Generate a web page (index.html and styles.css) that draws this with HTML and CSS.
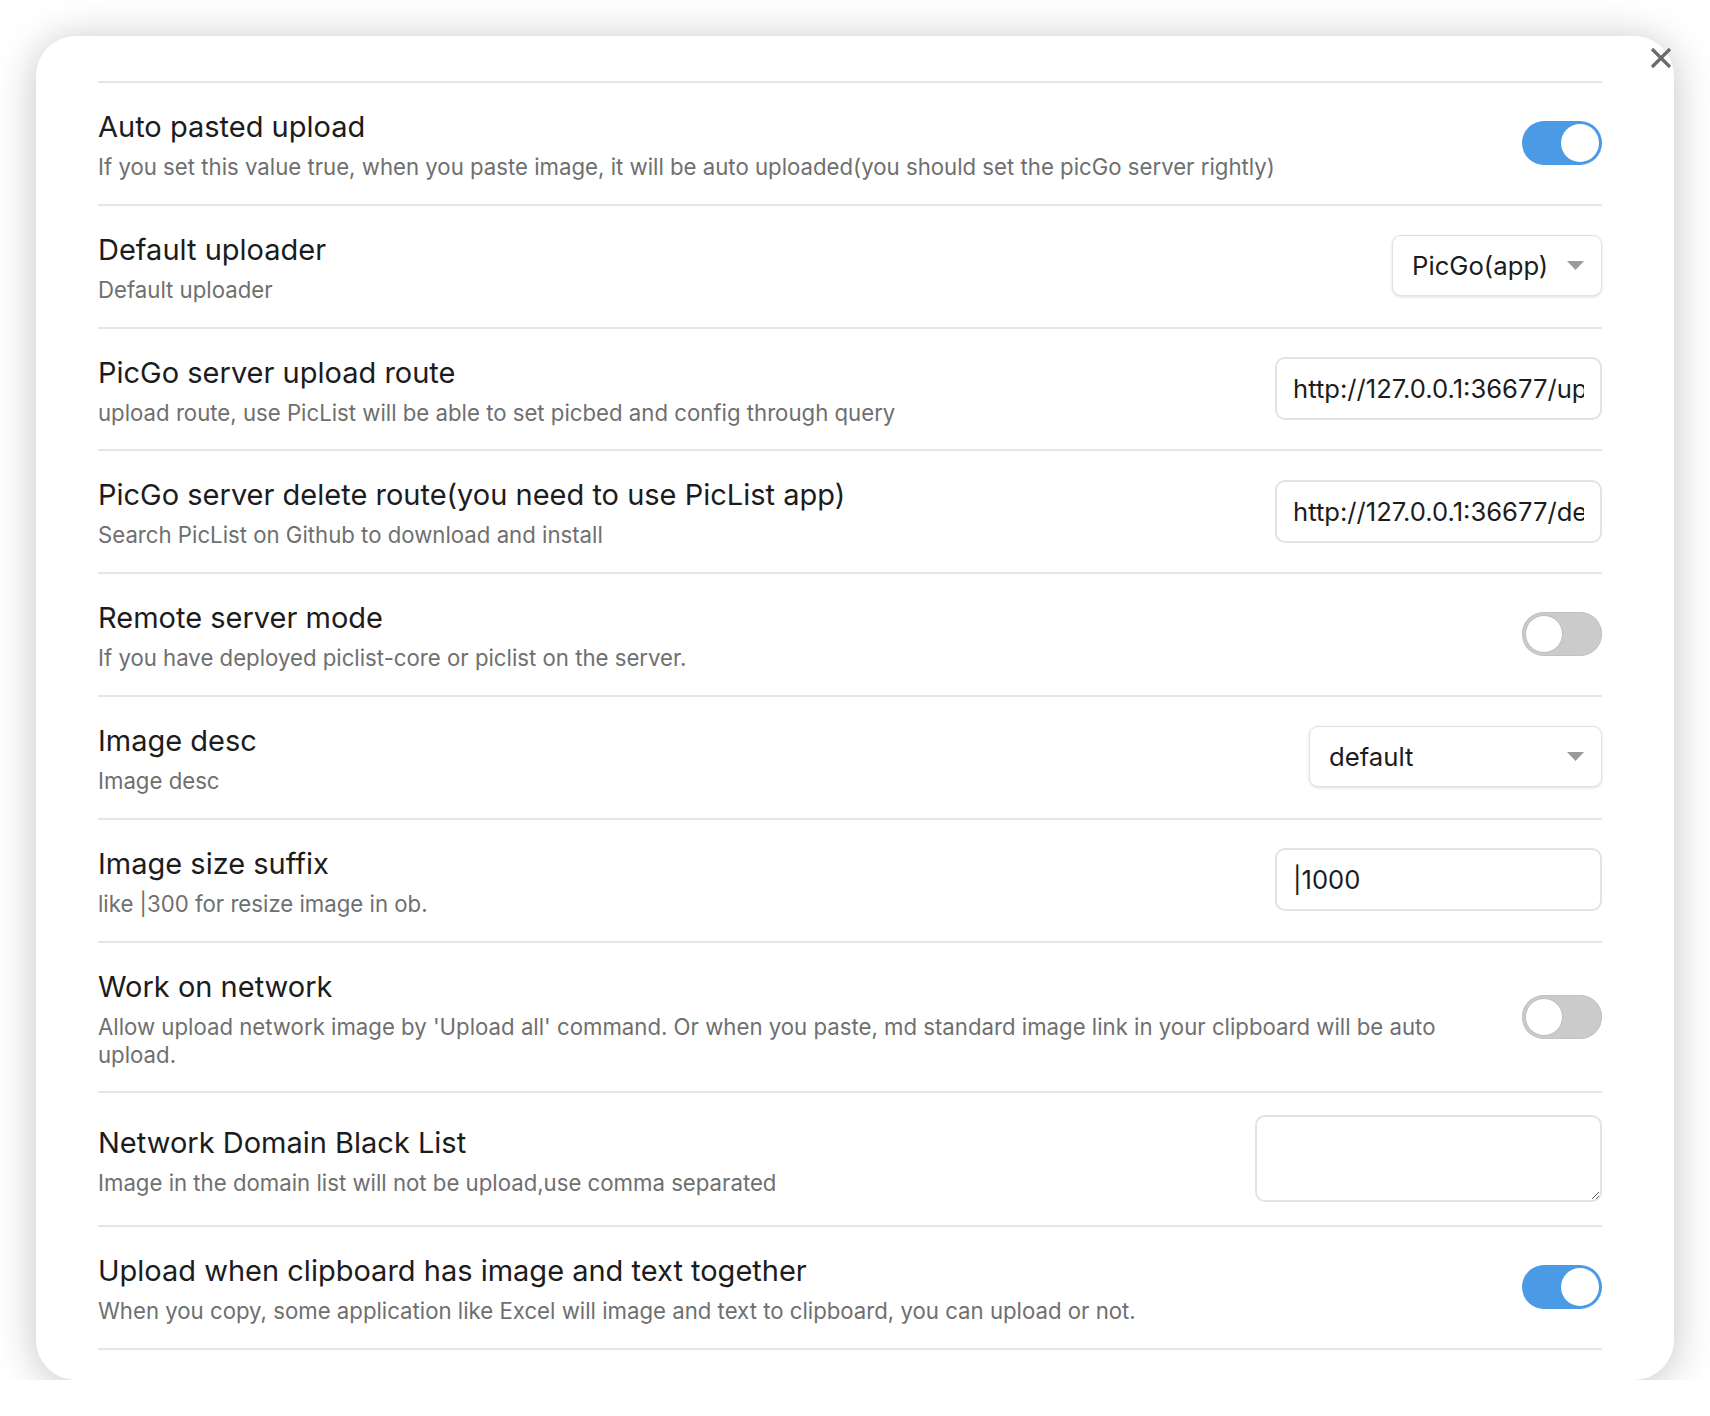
FILE: index.html
```html
<!DOCTYPE html>
<html lang="en">
<head>
<meta charset="utf-8">
<title>Image auto upload settings</title>
<link rel="stylesheet" href="styles.css">
</head>
<body>
<div class="modal">
  <button class="close" aria-label="Close">
    <svg width="22" height="22" viewBox="0 0 22 22"><path d="M2 2 L20 20 M20 2 L2 20" stroke="#6b6b6b" stroke-width="3.2" stroke-linecap="butt" fill="none"/></svg>
  </button>
  <div class="settings">
    <div class="item">
      <div class="info">
        <div class="name">Auto pasted upload</div>
        <div class="desc">If you set this value true, when you paste image, it will be auto uploaded(you should set the picGo server rightly)</div>
      </div>
      <div class="control"><div class="toggle on"><span class="knob"></span></div></div>
    </div>
    <div class="item">
      <div class="info">
        <div class="name">Default uploader</div>
        <div class="desc">Default uploader</div>
      </div>
      <div class="control">
        <div class="dropdown dd-uploader"><span class="dd-text">PicGo(app)</span>
          <svg class="dd-arrow" width="17" height="9" viewBox="0 0 17 9"><path d="M0 0 H17 L8.5 9 Z" fill="#9a9a9a"/></svg>
        </div>
      </div>
    </div>
    <div class="item">
      <div class="info">
        <div class="name">PicGo server upload route</div>
        <div class="desc">upload route, use PicList will be able to set picbed and config through query</div>
      </div>
      <div class="control"><input class="text-input" type="text" value="http://127.0.0.1:36677/upload"></div>
    </div>
    <div class="item">
      <div class="info">
        <div class="name">PicGo server delete route(you need to use PicList app)</div>
        <div class="desc">Search PicList on Github to download and install</div>
      </div>
      <div class="control"><input class="text-input" type="text" value="http://127.0.0.1:36677/delete"></div>
    </div>
    <div class="item">
      <div class="info">
        <div class="name">Remote server mode</div>
        <div class="desc">If you have deployed piclist-core or piclist on the server.</div>
      </div>
      <div class="control"><div class="toggle"><span class="knob"></span></div></div>
    </div>
    <div class="item">
      <div class="info">
        <div class="name">Image desc</div>
        <div class="desc">Image desc</div>
      </div>
      <div class="control">
        <div class="dropdown dd-desc"><span class="dd-text">default</span>
          <svg class="dd-arrow" width="17" height="9" viewBox="0 0 17 9"><path d="M0 0 H17 L8.5 9 Z" fill="#9a9a9a"/></svg>
        </div>
      </div>
    </div>
    <div class="item">
      <div class="info">
        <div class="name">Image size suffix</div>
        <div class="desc">like |300 for resize image in ob.</div>
      </div>
      <div class="control"><input class="text-input" type="text" value="|1000"></div>
    </div>
    <div class="item">
      <div class="info info-narrow">
        <div class="name">Work on network</div>
        <div class="desc">Allow upload network image by 'Upload all' command. Or when you paste, md standard image link in your clipboard will be auto upload.</div>
      </div>
      <div class="control"><div class="toggle"><span class="knob"></span></div></div>
    </div>
    <div class="item">
      <div class="info">
        <div class="name">Network Domain Black List</div>
        <div class="desc">Image in the domain list will not be upload,use comma separated</div>
      </div>
      <div class="control"><textarea class="text-area"></textarea></div>
    </div>
    <div class="item last">
      <div class="info">
        <div class="name">Upload when clipboard has image and text together</div>
        <div class="desc">When you copy, some application like Excel will image and text to clipboard, you can upload or not.</div>
      </div>
      <div class="control"><div class="toggle on"><span class="knob"></span></div></div>
    </div>
  </div>
</div>
</body>
</html>
```
FILE: styles.css
```css
html, body {
  margin: 0;
  background: #ffffff;
}
body {
  font-family: Inter, "Liberation Sans", "Noto Sans", sans-serif;
  color: #1f1f1f;
}
.modal {
  position: relative;
  box-sizing: border-box;
  width: 1638px;
  margin: 36px 0 0 36px;
  padding: 45px 72px 30px 62px;
  background: #ffffff;
  border-radius: 40px;
  box-shadow: 0 4px 42px rgba(0, 0, 0, 0.24);
}
.close {
  position: absolute;
  top: 11px;
  right: 2px;
  width: 22px;
  height: 22px;
  padding: 0;
  border: 0;
  background: transparent;
  display: flex;
}
.item {
  display: flex;
  align-items: center;
  border-top: 2px solid #e6e6e6;
  padding: 22px 0 22.8px;
}
.item.last {
  border-bottom: 2px solid #e6e6e6;
}
.info {
  flex: 1 1 auto;
  min-width: 0;
  display: flex;
  flex-direction: column;
  gap: 8px;
  margin-right: 24px;
}
.info-narrow {
  max-width: 1360px;
}
.name {
  font-size: 29px;
  line-height: 36px;
  padding-top: 4px;
  color: #1c1c1c;
}
.desc {
  font-size: 22.2px;
  line-height: 28px;
  color: #6f6f6f;
}
.control {
  flex: 0 0 auto;
  margin-left: auto;
  display: flex;
  justify-content: flex-end;
  align-items: center;
}
.toggle {
  position: relative;
  box-sizing: border-box;
  width: 80px;
  height: 44px;
  border-radius: 22px;
  background: #cbcbcb;
  box-shadow: inset 0 0 0 1px #c2c2c2;
}
.toggle .knob {
  position: absolute;
  top: 3px;
  left: 3px;
  width: 38px;
  height: 38px;
  box-sizing: border-box;
  border-radius: 50%;
  background: #ffffff;
  border: 1px solid #bdbdbd;
}
.toggle.on {
  background: #4b9ae6;
  box-shadow: none;
}
.toggle.on .knob {
  left: auto;
  right: 3px;
  border: none;
}
.dropdown {
  box-sizing: border-box;
  height: 61px;
  display: flex;
  align-items: center;
  justify-content: space-between;
  padding: 0 17px 0 19px;
  border: 1px solid #e2e2e2;
  border-radius: 9px;
  background: #ffffff;
  box-shadow: 0 1px 3px rgba(0, 0, 0, 0.14);
  font-size: 25.7px;
  color: #1c1c1c;
}
.dd-uploader { width: 210px; }
.dd-desc { width: 293px; }
.dd-arrow { display: block; }
.text-input {
  box-sizing: border-box;
  width: 327px;
  height: 63px;
  padding: 0 16px;
  border: 2px solid #e3e3e3;
  border-radius: 10px;
  background: #ffffff;
  font-family: Inter, "Liberation Sans", sans-serif;
  font-size: 25.6px;
  color: #1c1c1c;
  outline: none;
}
.text-area {
  display: block;
  box-sizing: border-box;
  width: 347px;
  height: 87px;
  padding: 10px 16px;
  border: 2px solid #e3e3e3;
  border-radius: 10px;
  background: #ffffff;
  font-family: Inter, "Liberation Sans", sans-serif;
  font-size: 24px;
  outline: none;
  resize: both;
}
```
